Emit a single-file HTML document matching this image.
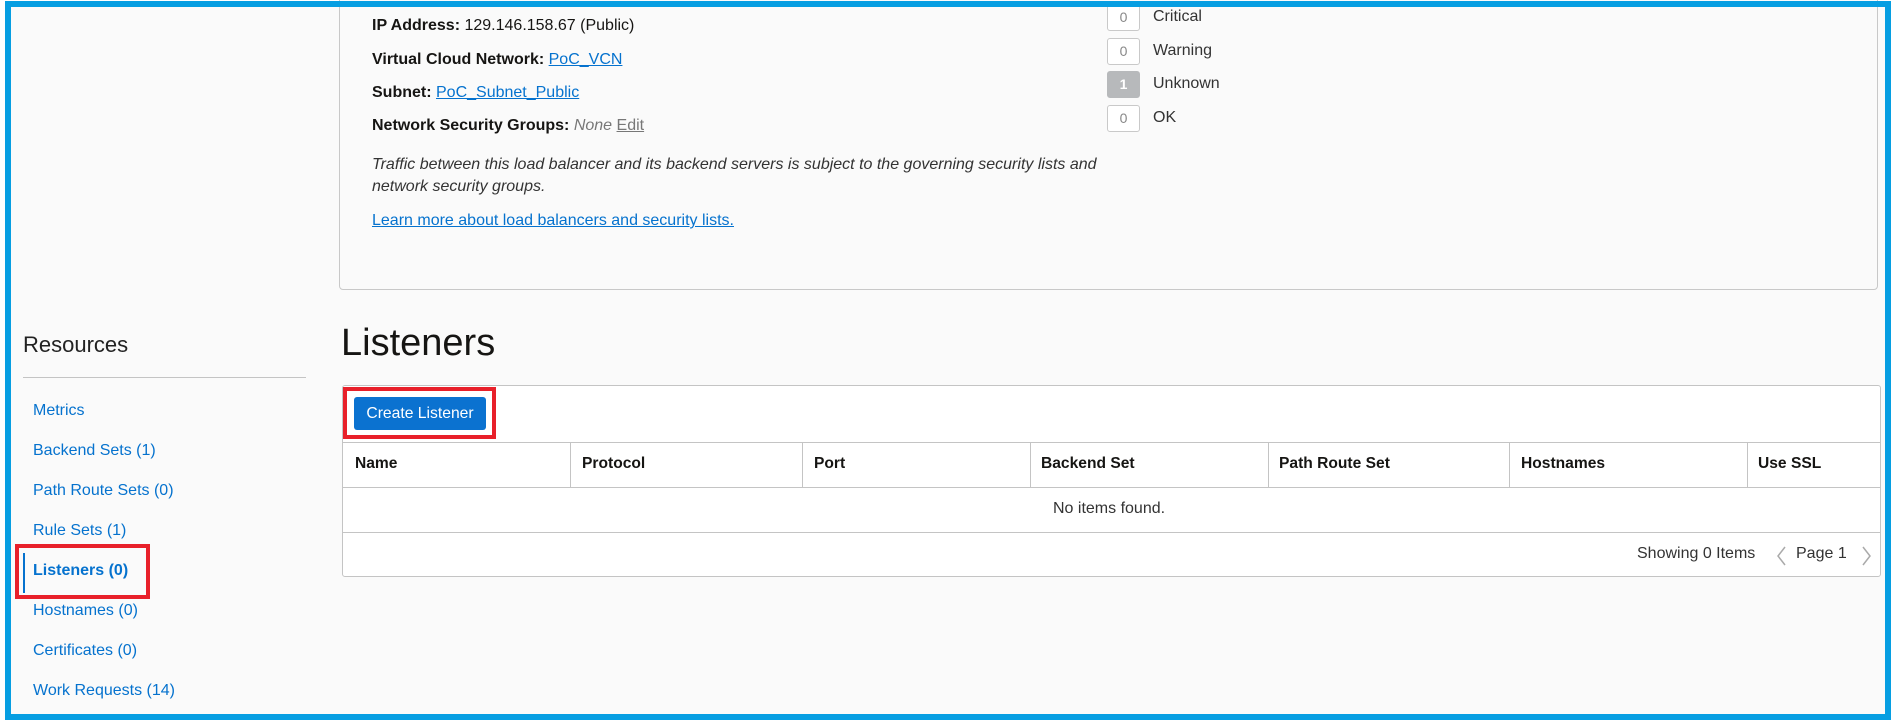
<!DOCTYPE html>
<html><head><meta charset="utf-8"><style>
*{margin:0;padding:0;box-sizing:border-box}
body{width:1891px;height:722px;background:#fff;font-family:"Liberation Sans",Arial,sans-serif;overflow:hidden;position:relative;color:#161513}
.bg{position:absolute;left:5px;top:1px;width:1886px;height:719px;background:#fafafa}
.frame{position:absolute;left:5px;top:1px;width:1886px;height:719px;border:6px solid #069ee2;z-index:10}
.a{position:absolute;white-space:nowrap}
.lab{font-size:16px;left:372px}
.lab b{font-weight:bold}
.lk{color:#0572ce;text-decoration:underline}
.side{position:absolute;left:33px;font-size:16px;color:#0572ce}
.box{position:absolute;left:1107px;width:33px;height:27px;border:1px solid #c9c9c9;border-radius:3px;font-size:14px;color:#888;text-align:center;line-height:25px;background:#fff}
.st{position:absolute;left:1153px;font-size:16px;color:#333}
.th{position:absolute;top:455px;font-size:15.6px;font-weight:bold}
.vd{position:absolute;top:442px;width:1px;height:45px;background:#c4c4c4}
</style></head><body>
<div class="bg"></div>
<div class="frame"></div>
<div class="a" style="left:339px;top:-4px;width:1539px;height:294px;border:1px solid #c8c8c8;border-radius:0 0 4px 4px;background:#fafafa"></div>
<div class="a lab" style="top:17px"><b>IP Address:</b> 129.146.158.67 (Public)</div>
<div class="a lab" style="top:51px"><b>Virtual Cloud Network:</b> <span class="lk">PoC_VCN</span></div>
<div class="a lab" style="top:84px"><b>Subnet:</b> <span class="lk">PoC_Subnet_Public</span></div>
<div class="a lab" style="top:117px"><b>Network Security Groups:</b> <i style="color:#777">None</i> <span style="color:#777;text-decoration:underline">Edit</span></div>
<div class="a lab" style="top:156px;font-style:italic;color:#333">Traffic between this load balancer and its backend servers is subject to the governing security lists and</div>
<div class="a lab" style="top:178px;font-style:italic;color:#333">network security groups.</div>
<div class="a lab lk" style="top:212px">Learn more about load balancers and security lists.</div>
<div class="box" style="top:4px">0</div><div class="st" style="top:8px">Critical</div>
<div class="box" style="top:38px">0</div><div class="st" style="top:42px">Warning</div>
<div class="box" style="top:71px;background:#b7b9bb;border-color:#b7b9bb;color:#fff;font-weight:bold">1</div><div class="st" style="top:75px">Unknown</div>
<div class="box" style="top:105px">0</div><div class="st" style="top:109px">OK</div>

<div class="a" style="left:23px;top:332px;font-size:22px;color:#222">Resources</div>
<div class="a" style="left:23px;top:377px;width:283px;height:1px;background:#c4c4c4"></div>
<div class="side" style="top:402px">Metrics</div>
<div class="side" style="top:442px">Backend Sets (1)</div>
<div class="side" style="top:482px">Path Route Sets (0)</div>
<div class="side" style="top:522px">Rule Sets (1)</div>
<div class="side" style="top:562px;font-weight:bold">Listeners (0)</div>
<div class="side" style="top:602px">Hostnames (0)</div>
<div class="side" style="top:642px">Certificates (0)</div>
<div class="side" style="top:682px">Work Requests (14)</div>
<div class="a" style="left:23px;top:553px;width:2px;height:40px;background:#0572ce"></div>
<div class="a" style="left:15px;top:544px;width:135px;height:55px;border:4px solid #e8202a"></div>

<div class="a" style="left:341px;top:322px;font-size:38px;color:#161513">Listeners</div>
<div class="a" style="left:342px;top:385px;width:1539px;height:192px;border:1px solid #c4c4c4;border-radius:3px;background:#fff"></div>
<div class="a" style="left:342px;top:442px;width:1539px;height:1px;background:#c4c4c4"></div>
<div class="a" style="left:342px;top:487px;width:1539px;height:1px;background:#c4c4c4"></div>
<div class="a" style="left:342px;top:532px;width:1539px;height:1px;background:#c4c4c4"></div>
<div class="a" style="left:354px;top:397px;width:132px;height:33px;background:#0b72d0;border-radius:3px;color:#fff;font-size:15.7px;text-align:center;line-height:33px">Create Listener</div>
<div class="a" style="left:343px;top:387px;width:153px;height:52px;border:4px solid #e8202a"></div>
<div class="vd" style="left:570px"></div><div class="vd" style="left:802px"></div><div class="vd" style="left:1030px"></div><div class="vd" style="left:1268px"></div><div class="vd" style="left:1509px"></div><div class="vd" style="left:1747px"></div>
<div class="th" style="left:355px">Name</div><div class="th" style="left:582px">Protocol</div><div class="th" style="left:814px">Port</div><div class="th" style="left:1041px">Backend Set</div><div class="th" style="left:1279px">Path Route Set</div><div class="th" style="left:1521px">Hostnames</div><div class="th" style="left:1758px">Use SSL</div>
<div class="a" style="left:1053px;top:500px;font-size:16px;color:#333">No items found.</div>
<div class="a" style="left:1637px;top:545px;font-size:16px;color:#333">Showing 0 Items</div>
<svg class="a" style="left:1774px;top:545px" width="14" height="22"><path d="M11 2 L4 11 L11 20" stroke="#aaa" stroke-width="1.5" fill="none"/></svg>
<div class="a" style="left:1796px;top:545px;font-size:16px;color:#333">Page 1</div>
<svg class="a" style="left:1860px;top:545px" width="14" height="22"><path d="M3 2 L10 11 L3 20" stroke="#aaa" stroke-width="1.5" fill="none"/></svg>
</body></html>
